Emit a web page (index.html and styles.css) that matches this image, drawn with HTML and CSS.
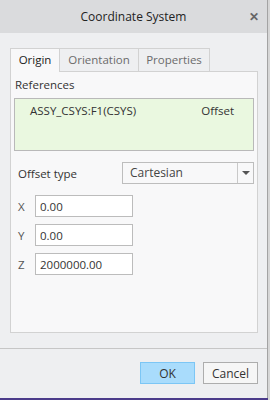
FILE: index.html
```html
<!DOCTYPE html>
<html lang="en">
<head>
  <meta charset="UTF-8">
  <meta name="viewport" content="width=device-width, initial-scale=1.0">
  <title>Coordinate System</title>
  <link rel="stylesheet" href="styles.css">
</head>
<body>
  <div class="window">
    <div class="titlebar">
      <span class="title">Coordinate System</span>
      <span class="close">&#10005;</span>
    </div>

    <div class="content">
      <div class="tabs">
        <div class="tab active">Origin</div>
        <div class="tab wide">Orientation</div>
        <div class="tab mid">Properties</div>
      </div>

      <div class="panel">
        <div class="section-label">References</div>
        <div class="ref-box">
          <div class="ref-row">
            <span class="ref-name">ASSY_CSYS:F1(CSYS)</span>
            <span class="ref-type">Offset</span>
          </div>
        </div>

        <div class="offset-row">
          <span class="label">Offset type</span>
          <div class="select">
            <span class="select-value">Cartesian</span>
            <span class="select-arrow"></span>
          </div>
        </div>

        <div class="coords">
          <div class="coord"><span class="axis">X</span><input class="field" value="0.00"></div>
          <div class="coord"><span class="axis">Y</span><input class="field" value="0.00"></div>
          <div class="coord"><span class="axis">Z</span><input class="field" value="2000000.00"></div>
        </div>
      </div>
    </div>

    <div class="footer">
      <button class="btn primary">OK</button>
      <button class="btn">Cancel</button>
    </div>
  </div>
  <div class="taskbar"></div>
</body>
</html>
```

FILE: styles.css
```css
/* Basic Reset */
* { box-sizing: border-box; margin: 0; padding: 0; }

body {
  width: 270px;
  height: 400px;
  background: #d6d6d6;
  font-family: "Open Sans", "Noto Sans", sans-serif;
  font-size: 11.5px;
  color: #333;
  overflow: hidden;
}

/* Dialog window */
.window {
  width: 268px;
  height: 398px;
  background: #eeeff1;
  border-right: 1px solid #a3a3a3;
  display: flex;
  flex-direction: column;
}

.titlebar {
  height: 33px;
  background: #dadbdd;
  display: flex;
  align-items: center;
  justify-content: center;
  position: relative;
}
.title {
  font-size: 12px;
  color: #222;
}
.close {
  position: absolute;
  right: 8px;
  top: 8px;
  font-size: 12px;
  font-weight: bold;
  color: #666;
}

/* Tabs + panel */
.content {
  padding: 15px 10px 0 10px;
  height: 315px;
}
.tabs {
  display: flex;
  height: 23px;
}
.tab {
  width: 71px;
  text-align: center;
  height: 23px;
  line-height: 21px;
  color: #6b6b6b;
  border: 1px solid #d2d2d2;
  border-bottom: none;
  border-left: none;
  background: #eeeff1;
}
.tab.wide { width: 79px; }
.tab.active {
  width: 50px;
  color: #222;
  background: #f8f8f9;
  border-left: 1px solid #d2d2d2;
  position: relative;
  z-index: 1;
  height: 24px;
}

.panel {
  width: 248px;
  height: 262px;
  background: #f8f8f9;
  border: 1px solid #d2d2d2;
  padding: 3px 3px 0 3px;
}
.section-label {
  height: 23px;
  line-height: 20px;
  padding-left: 1px;
  color: #333;
}
.ref-box {
  height: 53px;
  background: #eaf8e0;
  border: 1px solid #b9b9b9;
  padding-top: 4px;
}
.ref-row {
  display: flex;
  justify-content: space-between;
  padding: 0 19px 0 15px;
  color: #333;
}

.offset-row {
  display: flex;
  align-items: center;
  justify-content: space-between;
  margin-top: 11px;
  padding-left: 4px;
}
.select {
  width: 132px;
  height: 22px;
  display: flex;
  background: #f8f8f9;
  border: 1px solid #bdbdbd;
}
.select-value {
  flex: 1;
  padding-left: 7px;
  line-height: 20px;
  color: #444;
  font-size: 12px;
  border-right: 1px solid #c9c9c9;
}
.select-arrow {
  width: 15px;
  display: flex;
  align-items: center;
  justify-content: center;
}
.select-arrow::after {
  content: "";
  border-left: 4px solid transparent;
  border-right: 4px solid transparent;
  border-top: 4px solid #555;
}

.coords {
  display: flex;
  flex-direction: column;
  gap: 7px;
  margin-top: 11px;
}
.coord {
  display: flex;
  align-items: center;
  padding-left: 4px;
}
.axis {
  width: 17px;
  color: #555;
}
.field {
  width: 98px;
  height: 22px;
  border: 1px solid #bcbcbc;
  background: #fff;
  padding-left: 4px;
  font-family: inherit;
  font-size: 11.5px;
  color: #333;
}

/* Footer buttons */
.footer {
  border-top: 1px solid #c6c6c6;
  padding: 13px 9px 0 0;
  display: flex;
  justify-content: flex-end;
  gap: 8px;
}
.btn {
  width: 55px;
  height: 22px;
  font-family: inherit;
  font-size: 12px;
  color: #333;
  background: #f6f6f6;
  border: 1px solid #adadad;
}
.btn.primary {
  background: #a9dcfc;
  border: 1px solid #7cc6f5;
}

.taskbar {
  width: 268px;
  height: 2px;
  background: #4b3b8a;
}
```
